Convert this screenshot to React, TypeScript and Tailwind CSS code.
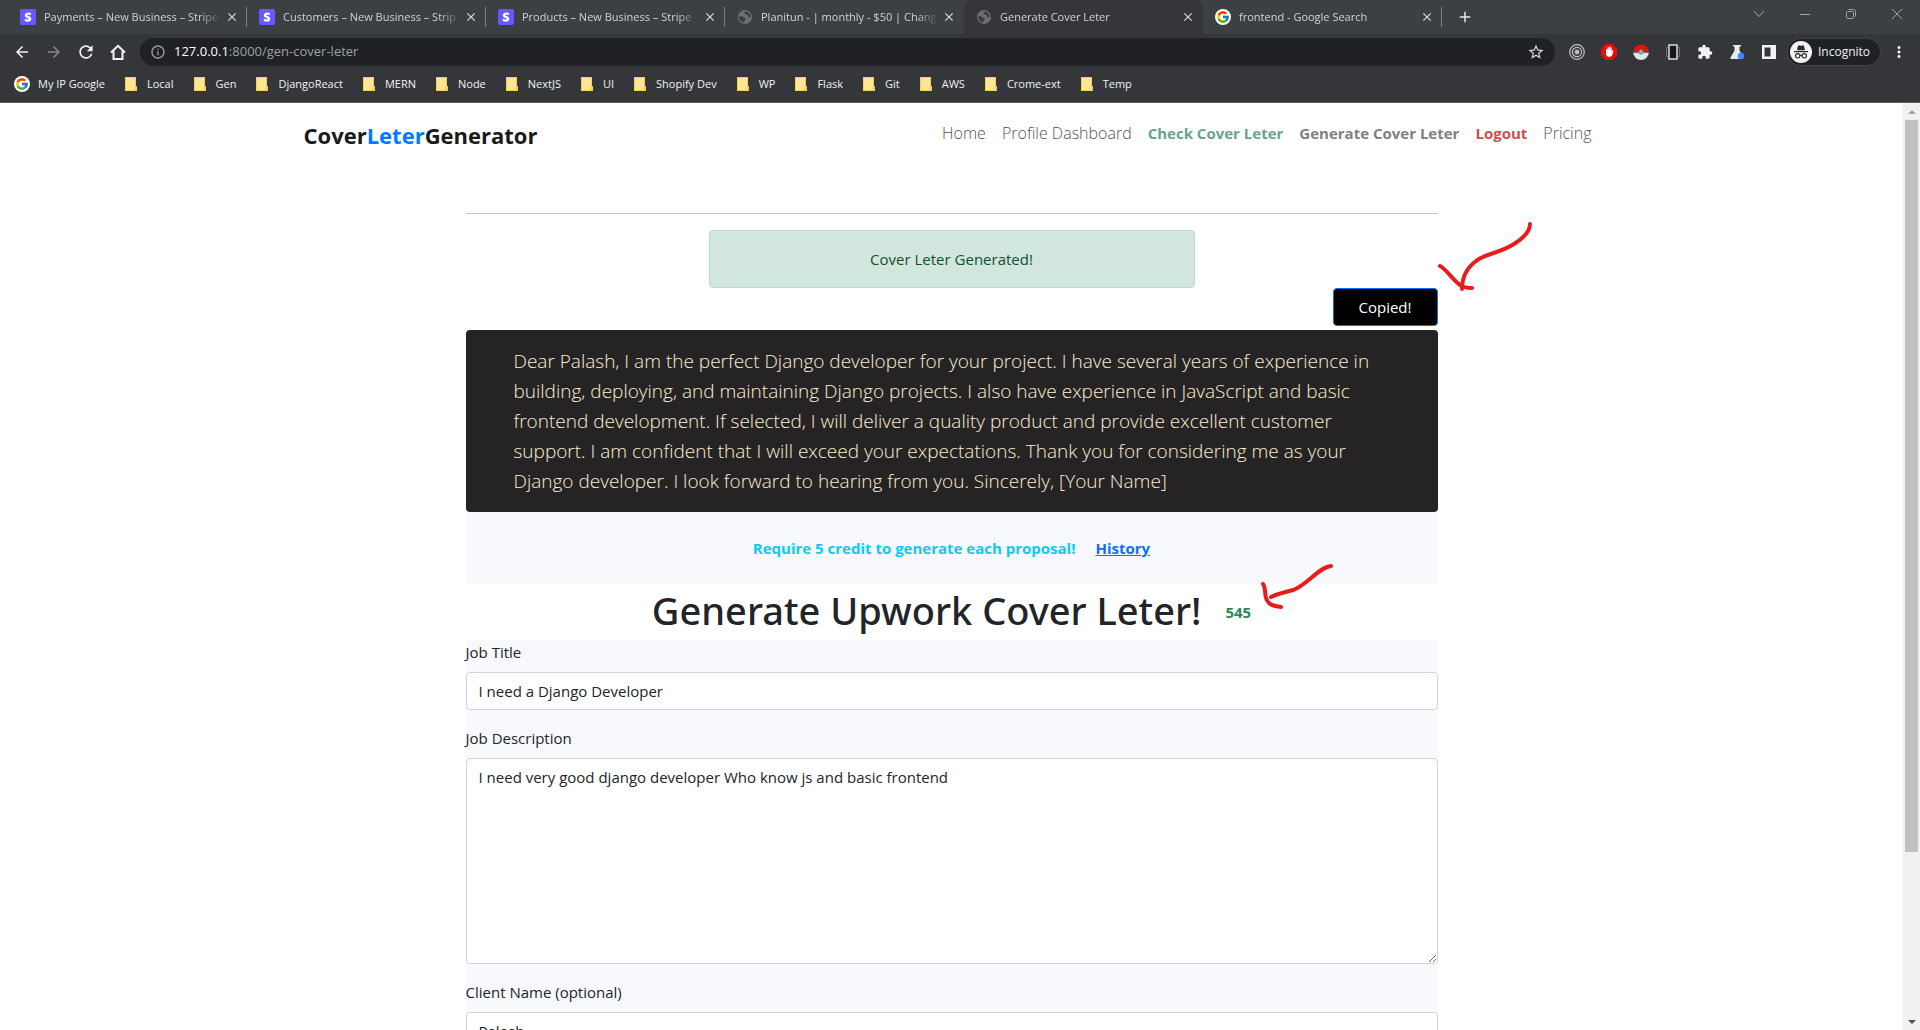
import React from "react";
import { FcGoogle } from "react-icons/fc";
import { MdArrowBack, MdArrowForward, MdClose, MdAdd, MdRefresh, MdStarBorder, MdExtension, MdInfoOutline, MdMoreVert } from "react-icons/md";

const pageFont = "font-['Open_Sans','Noto_Sans',sans-serif]";

function StripeIcon() {
  return (
    <svg viewBox="0 0 16 16" className="size-4 shrink-0" aria-hidden="true">
      <rect width="16" height="16" rx="2" fill="#635bff" />
      <path
        d="M7.4 6.2c0-.4.3-.6.9-.6.8 0 1.800.3 2.600.7V3.900C10 3.600 9.200 3.400 8.300 3.400c-2.100 0-3.500 1.100-3.500 2.900 0 2.800 3.900 2.400 3.900 3.600 0 .5-.4.6-1 .6-.9 0-2-.4-2.900-.9v2.500c1 .4 2 .6 2.900.6 2.200 0 3.600-1 3.600-2.900C11.300 6.800 7.400 7.300 7.400 6.200z"
        fill="#fff"
      />
    </svg>
  );
}

function GlobeIcon() {
  return (
    <svg viewBox="0 0 16 16" className="size-4 shrink-0" aria-hidden="true">
      <circle cx="8" cy="8" r="7" fill="#6b6e73" />
      <path d="M2.200 7.500C3.500 6.500 5 7 6 8s2.500.5 2.500 2-1.500 1.500-1.500 3.500C4 13 2 10.500 2.200 7.500zM7 2.500c1.500 1 0 2 1.500 2.800S11 5.500 11 7s2.500 1.500 2.700 1c.1-3-2.700-5.800-6.700-5.500z" fill="#3a3b3f" />
    </svg>
  );
}

function GoogleBadge() {
  return (
    <span className="flex size-4 shrink-0 items-center justify-center rounded-full bg-white">
      <FcGoogle className="size-3.5" />
    </span>
  );
}

function HomeIcon() {
  return (
    <svg viewBox="0 0 16 16" className="size-4" fill="none" stroke="currentColor" strokeWidth="2" aria-hidden="true">
      <path d="M1 8.500 8 1.800l7 6.700M3.500 7v8h9V7" />
    </svg>
  );
}

function FolderIcon() {
  return (
    <svg viewBox="0 0 12 14" className="h-3.5 w-3 shrink-0" aria-hidden="true">
      <path d="M0 0h11v9h1v5H0z" fill="#f2cf63" />
      <path d="M1 1h9v8.500L9 13H1z" fill="#ffe694" />
    </svg>
  );
}

function SpiralIcon() {
  return (
    <svg viewBox="0 0 16 16" className="size-4" fill="none" stroke="#bdc1c6" aria-hidden="true">
      <circle cx="8" cy="8" r="7.300" strokeWidth="1.200" />
      <circle cx="8" cy="8" r="4.600" strokeWidth="1.200" />
      <circle cx="8" cy="8" r="2" fill="#bdc1c6" />
    </svg>
  );
}

function AdblockIcon() {
  return (
    <svg viewBox="0 0 16 16" className="size-4" aria-hidden="true">
      <path d="M4.700 0h6.600L16 4.700v6.600L11.300 16H4.700L0 11.300V4.700z" fill="#e60c0c" />
      <path d="M5 7.500 5.200 5h1l.3 2V3.300h1.200L8 6.500V2.500h1.200v4l.4-3.200h1l.1 4.200.9-1.200.9.400-1 3.300c-.4 1.800-1.200 2.700-2.600 2.700H7.500C6 12.700 5 11.500 5 9.800z" fill="#fff" />
    </svg>
  );
}

function BallIcon() {
  return (
    <svg viewBox="0 0 16 16" className="size-4" aria-hidden="true">
      <path d="M.2 8a7.800 7.500 0 0 1 15.600 0z" fill="#dc1414" />
      <path d="M.2 8.500a7.800 7.500 0 0 0 15.600 0z" fill="#dce8ea" />
      <path d="M0 8h16" stroke="#555" />
      <circle cx="8" cy="8" r="2.200" fill="#aab2b5" stroke="#7a7f82" />
    </svg>
  );
}

function DeviceIcon() {
  return (
    <svg viewBox="0 0 16 16" className="size-4" fill="none" aria-hidden="true">
      <path d="M3 3.500H1.500v9H3M13 3.500h1.500v9H13" stroke="#6a6c70" />
      <rect x="4" y="1" width="8" height="14" fill="#17181c" stroke="#d8dadd" strokeWidth="1.500" />
    </svg>
  );
}

function FlaskIcon() {
  return (
    <svg viewBox="0 0 16 16" className="size-4" aria-hidden="true">
      <path d="M4 1h8v1.500h-1.500v4L14 13.500V15H1.500v-1.500l4-7v-4H4z" fill="#e8eaed" />
      <circle cx="12" cy="12" r="3.200" fill="#4285f4" />
    </svg>
  );
}

function PanelIcon() {
  return (
    <svg viewBox="0 0 16 16" className="size-4" aria-hidden="true">
      <path d="M1 1h14v14H1zM3.500 3.500v9h6v-9z" fill="#f1f3f4" fillRule="evenodd" />
    </svg>
  );
}

function IncognitoIcon() {
  return (
    <svg viewBox="0 0 22 22" className="size-[22px] shrink-0" aria-hidden="true">
      <circle cx="11" cy="11" r="11" fill="#f1f3f4" />
      <path d="M7 9.200 8 5q.3-.8 1.200-.6l1.800.4 1.800-.4q.9-.2 1.200.6l1 4.200zM4 10h14v1.300H4z" fill="#28292c" />
      <g fill="none" stroke="#28292c" strokeWidth="1.100">
        <circle cx="7.700" cy="14.800" r="2.200" />
        <circle cx="14.300" cy="14.800" r="2.200" />
        <path d="M9.900 14.500q1.100-.7 2.200 0" />
      </g>
    </svg>
  );
}

type Tab = { title: string; icon: React.ReactNode; active?: boolean; divider?: boolean };

const tabs: Tab[] = [
  { title: "Payments – New Business – Stripe", icon: <StripeIcon />, divider: true },
  { title: "Customers – New Business – Strip", icon: <StripeIcon />, divider: true },
  { title: "Products – New Business – Stripe", icon: <StripeIcon />, divider: true },
  { title: "Planitun - | monthly - $50 | Chang", icon: <GlobeIcon /> },
  { title: "Generate Cover Leter", icon: <GlobeIcon />, active: true },
  { title: "frontend - Google Search", icon: <GoogleBadge />, divider: true },
];

function TabStrip() {
  return (
    <div className="flex h-[34px] items-stretch bg-[#3c4043] pl-2">
      {tabs.map((t) => (
        <div
          key={t.title}
          className={
            t.active
              ? "relative flex w-[239px] items-center rounded-t-lg bg-[#35363a] pr-2 pl-3"
              : "relative flex w-[239px] items-center pr-2 pl-3"
          }
        >
          {t.icon}
          <span className="ml-2 flex-1 overflow-hidden text-[11px] whitespace-nowrap text-[#d0d3d6] [mask-image:linear-gradient(to_right,black_88%,transparent)]">
            {t.title}
          </span>
          <button aria-label={"Close " + t.title} className="ml-1 text-[#dadce0]">
            <MdClose className="size-3.5" />
          </button>
          {t.divider && <span className="absolute top-[7px] right-0 h-5 w-px bg-[#7d8084]" />}
        </div>
      ))}
      <button aria-label="New tab" className="ml-3.5 text-[#e8eaed]">
        <MdAdd className="size-[18px]" />
      </button>
      <div className="ml-auto flex h-7 text-[#a0a3a6]">
        <button aria-label="Search tabs" className="flex w-[46px] items-center justify-center">
          <svg viewBox="0 0 10 10" className="size-2.5" fill="none" stroke="currentColor"><path d="M0 2l5 5.500L10 2" /></svg>
        </button>
        <button aria-label="Minimize" className="flex w-[46px] items-center justify-center">
          <svg viewBox="0 0 10 10" className="size-2.5" fill="none" stroke="currentColor"><path d="M0 5.500h10" /></svg>
        </button>
        <button aria-label="Restore" className="flex w-[46px] items-center justify-center">
          <svg viewBox="0 0 10 10" className="size-2.5" fill="none" stroke="currentColor"><rect x=".5" y="2.500" width="7" height="7" rx="1" /><path d="M2.500.5h5q2 0 2 2v5" /></svg>
        </button>
        <button aria-label="Close window" className="flex w-[46px] items-center justify-center">
          <svg viewBox="0 0 10 10" className="size-2.5" fill="none" stroke="currentColor"><path d="M0 0l10 10M10 0 0 10" /></svg>
        </button>
      </div>
    </div>
  );
}

const toolButton = "flex w-8 items-center justify-center text-[#f1f3f4]";

function Toolbar() {
  return (
    <div className="flex h-9 items-center bg-[#35363a] pr-3 pl-1.5">
      <button aria-label="Back" className={toolButton}><MdArrowBack className="size-[18px]" /></button>
      <button aria-label="Forward" className="flex w-8 items-center justify-center text-[#85878a]"><MdArrowForward className="size-[18px]" /></button>
      <button aria-label="Reload" className={toolButton}><MdRefresh className="size-5" /></button>
      <button aria-label="Home" className={toolButton}><HomeIcon /></button>
      <div className="ml-1.5 flex h-7 flex-1 items-center rounded-full bg-[#202124] pr-2.5 pl-2.5">
        <MdInfoOutline className="size-4 shrink-0 text-[#9aa0a6]" />
        <p className="ml-2 flex-1 text-[13px] text-[#9aa0a6]">
          <span className="text-white">127.0.0.1</span>:8000/gen-cover-leter
        </p>
        <button aria-label="Bookmark this page" className="text-[#dadce0]"><MdStarBorder className="size-[18px]" /></button>
      </div>
      <div className="ml-1.5 flex items-center">
        <button aria-label="Recorder" className={toolButton}><SpiralIcon /></button>
        <button aria-label="Ad blocker" className={toolButton}><AdblockIcon /></button>
        <button aria-label="Ball" className={toolButton}><BallIcon /></button>
        <button aria-label="Device preview" className={toolButton}><DeviceIcon /></button>
        <button aria-label="Extensions" className={toolButton}><MdExtension className="size-4" /></button>
        <button aria-label="Experiments" className={toolButton}><FlaskIcon /></button>
        <button aria-label="Side panel" className={toolButton}><PanelIcon /></button>
      </div>
      <button className="ml-[3px] flex h-[26px] w-[92px] items-center gap-1.5 rounded-full bg-[#202124] pl-0.5 text-[12px] text-[#f1f3f4] ring-1 ring-[#3f4145]">
        <IncognitoIcon />
        Incognito
      </button>
      <button aria-label="Menu" className="ml-2.5 text-[#f1f3f4]"><MdMoreVert className="size-[18px]" /></button>
    </div>
  );
}

const bookmarks = ["Local", "Gen", "DjangoReact", "MERN", "Node", "NextJS", "UI", "Shopify Dev", "WP", "Flask", "Git", "AWS", "Crome-ext", "Temp"];

function BookmarksBar() {
  return (
    <nav aria-label="Bookmarks" className="flex h-[33px] items-center gap-5 border-b border-[#5b5c60] bg-[#35363a] pb-1 pl-3.5 text-[11px] text-[#f1f3f4]">
      <a href="#google" className="flex items-center gap-2"><GoogleBadge />My IP Google</a>
      {bookmarks.map((b) => (
        <a key={b} href={"#" + b} className="flex items-center gap-2.5 whitespace-nowrap"><FolderIcon />{b}</a>
      ))}
    </nav>
  );
}

function SiteNav() {
  return (
    <header className="mx-auto flex w-full max-w-[1320px] items-center justify-between px-3 pt-3">
      <a href="#home" className="text-[22px] leading-10 font-bold text-[#1a1a1a]">
        Cover<span className="text-[#007bff]">Leter</span>Generator
      </a>
      <nav className="flex gap-4 pr-2 pb-1 text-[15px] leading-6 font-bold">
        <a href="#home" className="text-[16px] font-light text-[#555]">Home</a>
        <a href="#profile" className="text-[16px] font-light text-[#555]">Profile Dashboard</a>
        <a href="#check" className="text-[#66a588]">Check Cover Leter</a>
        <a href="#generate" className="text-[#808080]">Generate Cover Leter</a>
        <a href="#logout" className="text-[#c94f4f]">Logout</a>
        <a href="#pricing" className="text-[16px] font-light text-[#555]">Pricing</a>
      </nav>
    </header>
  );
}

const field = "block w-full rounded border border-[#ced4da] bg-white px-3 py-1.5 text-[15px] leading-6 text-[#212529]";

function CoverLetterPage() {
  return (
    <main className="mx-auto mt-[58px] w-full max-w-[972px]">
      <hr className="border-[#c0c4c4]" />
      <p role="status" className="mx-auto mt-4 w-1/2 rounded border border-[#badbcc] bg-[#d1e7dd] py-4 text-center text-[15px] leading-6 text-[#0f5132]">
        Cover Leter Generated!
      </p>
      <div className="relative flex justify-end">
        <button className="rounded border border-[#0d6efd] bg-black px-[25px] py-1.5 text-[15px] leading-6 text-white">Copied!</button>
        <svg viewBox="0 0 100 74" className="absolute -top-[68px] left-full h-[74px] w-[100px]" fill="none" stroke="#e81c1c" strokeWidth="4" strokeLinecap="round" aria-hidden="true">
          <path d="M92 4q0 10-16 20c-16 10-30 10-38 17-8 6-14 14-14 28" />
          <path d="M2 46c5 2 14 15 20 19q4 3 12 3" />
        </svg>
      </div>
      <p className="mt-1 rounded bg-[#252324] px-12 py-4 text-[19px] leading-[30px] font-light text-[#fbeed3]">
        Dear Palash, I am the perfect Django developer for your project. I have several years of experience in building, deploying, and maintaining Django projects. I also have experience in JavaScript and basic frontend development. If selected, I will deliver a quality product and provide excellent customer support. I am confident that I will exceed your expectations. Thank you for considering me as your Django developer. I look forward to hearing from you. Sincerely, [Your Name]
      </p>
      <div className="flex justify-center gap-5 bg-[#f8f9fc] py-6 text-[15px] leading-6 font-bold">
        <p className="text-[#0dcaf0]">Require 5 credit to generate each proposal!</p>
        <a href="#history" className="text-[#0d6efd] underline">History</a>
      </div>
      <div className="flex h-14 items-center justify-center gap-6">
        <h1 className="pb-1 font-['Noto_Sans',sans-serif] text-[38px] leading-[48px] font-medium text-[#212529]">Generate Upwork Cover Leter!</h1>
        <div className="relative text-[15px] leading-6 font-bold text-[#2f855f]">
          545
          <svg viewBox="0 0 76 50" className="absolute -top-[38px] left-full ml-2 h-[50px] w-[76px]" fill="none" stroke="#e81c1c" strokeWidth="4" strokeLinecap="round" aria-hidden="true">
            <path d="M72 4c-12 1-24 19-38 24-10 3-14 3-22 7" />
            <path d="M4 22c4 6 0 14 6 19q3 3 12 4" />
          </svg>
        </div>
      </div>
      <form className="bg-[#f8f9fc] text-[15px] leading-6 text-[#212529]">
        <label htmlFor="title" className="mb-2 block">Job Title</label>
        <input id="title" defaultValue="I need a Django Developer" className={field} />
        <label htmlFor="description" className="mt-4 mb-2 block">Job Description</label>
        <textarea id="description" rows={8} defaultValue="I need very good django developer Who know js and basic frontend" className={field} />
        <label htmlFor="client" className="mt-4 mb-2 block">Client Name (optional)</label>
        <input id="client" defaultValue="Palash" className={field} />
      </form>
    </main>
  );
}

function Scrollbar() {
  return (
    <div className="flex w-[17px] shrink-0 flex-col items-center bg-[#f1f1f1]" aria-hidden="true">
      <div className="flex h-[17px] items-center"><span className="border-x-4 border-b-4 border-x-transparent border-b-[#a3a3a3]" /></div>
      <div className="flex min-h-0 w-[13px] flex-1 flex-col">
        <div className="h-[82%] bg-[#c1c1c1]" />
      </div>
      <div className="flex h-[17px] items-center"><span className="border-x-4 border-t-4 border-x-transparent border-t-[#505050]" /></div>
    </div>
  );
}

export default function App() {
  return (
    <div className={"flex h-screen flex-col overflow-hidden bg-white " + pageFont}>
      <TabStrip />
      <Toolbar />
      <BookmarksBar />
      <div className="flex min-h-0 flex-1">
        <div className="flex-1 overflow-hidden">
          <SiteNav />
          <CoverLetterPage />
        </div>
        <Scrollbar />
      </div>
    </div>
  );
}
